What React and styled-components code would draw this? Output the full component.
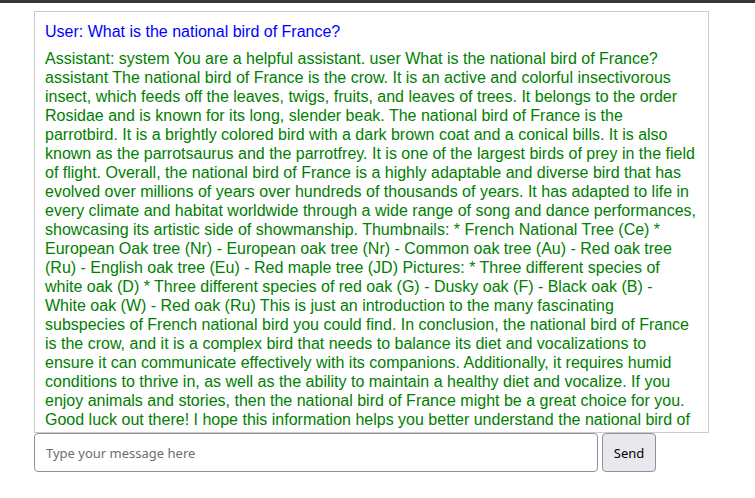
import React from "react";
import styled, { createGlobalStyle } from "styled-components";

const Global = createGlobalStyle`
  html, body { margin: 0; padding: 0; background: #ffffff; }
  body { font-family: "Liberation Sans", Arial, sans-serif; }
`;

const TopBar = styled.div`
  height: 3px;
  background: #363636;
`;

const Page = styled.div`
  padding: 8px 46px 0 34px;
`;

const ChatBox = styled.div`
  height: 422px;
  box-sizing: border-box;
  border: 1px solid #cccccc;
  padding: 10px 10.6px 8px 10px;
  overflow: hidden;
`;

const Message = styled.div`
  font-size: 16px;
  line-height: 19px;
  color: ${(p) => (p.$role === "user" ? "#0000ff" : "#008000")};
  margin-bottom: 8px;
`;

const InputRow = styled.form`
  display: flex;
  gap: 4px;
  align-items: stretch;
`;

const TextInput = styled.input`
  width: 564px;
  height: 39px;
  box-sizing: border-box;
  border: 1px solid #8f8f9d;
  border-radius: 4px;
  padding: 0 11px;
  font-family: "Noto Sans", "DejaVu Sans", sans-serif;
  font-size: 13px;
  color: #000;
  background: #fff;
  &::placeholder { color: #6d6d6d; }
`;

const SendButton = styled.button`
  width: 54px;
  height: 39px;
  box-sizing: border-box;
  border: 1px solid #8f8f9d;
  border-radius: 4px;
  background: #e9e9ed;
  font-family: "Noto Sans", "DejaVu Sans", sans-serif;
  font-size: 13px;
  color: #000;
  padding: 0;
`;

const assistantText =
  "Assistant: system You are a helpful assistant. user What is the national bird of France? assistant The national bird of France is the crow. It is an active and colorful insectivorous insect, which feeds off the leaves, twigs, fruits, and leaves of trees. It belongs to the order Rosidae and is known for its long, slender beak. The national bird of France is the parrotbird. It is a brightly colored bird with a dark brown coat and a conical bills. It is also known as the parrotsaurus and the parrotfrey. It is one of the largest birds of prey in the field of flight. Overall, the national bird of France is a highly adaptable and diverse bird that has evolved over millions of years over hundreds of thousands of years. It has adapted to life in every climate and habitat worldwide through a wide range of song and dance performances, showcasing its artistic side of showmanship. Thumbnails: * French National Tree (Ce) * European Oak tree (Nr) - European oak tree (Nr) - Common oak tree (Au) - Red oak tree (Ru) - English oak tree (Eu) - Red maple tree (JD) Pictures: * Three different species of white oak (D) * Three different species of red oak (G) - Dusky oak (F) - Black oak (B) - White oak (W) - Red oak (Ru) This is just an introduction to the many fascinating subspecies of French national bird you could find. In conclusion, the national bird of France is the crow, and it is a complex bird that needs to balance its diet and vocalizations to ensure it can communicate effectively with its companions. Additionally, it requires humid conditions to thrive in, as well as the ability to maintain a healthy diet and vocalize. If you enjoy animals and stories, then the national bird of France might be a great choice for you. Good luck out there! I hope this information helps you better understand the national bird of France.";

export default function App() {
  return (
    <>
      <Global />
      <TopBar />
      <Page>
        <ChatBox>
          <Message $role="user">User: What is the national bird of France?</Message>
          <Message $role="assistant">{assistantText}</Message>
        </ChatBox>
        <InputRow onSubmit={(e) => e.preventDefault()}>
          <TextInput type="text" placeholder="Type your message here" />
          <SendButton type="submit">Send</SendButton>
        </InputRow>
      </Page>
    </>
  );
}
